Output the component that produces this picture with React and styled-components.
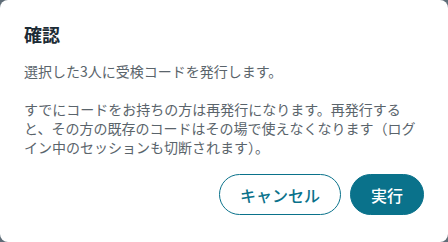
import styled, { createGlobalStyle } from "styled-components";

const GlobalStyle = createGlobalStyle`
  html, body {
    margin: 0;
    padding: 0;
    background: #5f6d78;
  }
  body {
    font-family: "Noto Sans CJK JP", "Noto Sans", sans-serif;
  }
`;

const Dialog = styled.div`
  box-sizing: border-box;
  width: 448px;
  height: 242px;
  background: #ffffff;
  border-radius: 8px;
  padding: 22px 24px 0;
  display: flex;
  flex-direction: column;
`;

const Title = styled.h2`
  margin: 0;
  font-size: 18px;
  line-height: 25px;
  font-weight: 700;
  color: #1c2b35;
`;

const Message = styled.p`
  margin: 15px 0 0;
  font-size: 14px;
  line-height: 19px;
  color: #5a646b;
  white-space: pre-line;
`;

const Actions = styled.div`
  display: flex;
  justify-content: flex-end;
  gap: 9px;
  margin-top: 17px;
`;

const Button = styled.button`
  box-sizing: border-box;
  height: 41px;
  padding: 0 20px;
  border-radius: 999px;
  border: 1px solid #0a728b;
  font-family: inherit;
  font-size: 16px;
  font-weight: 500;
  cursor: pointer;
  background: ${(p) => (p.$primary ? "#0a728b" : "#ffffff")};
  color: ${(p) => (p.$primary ? "#ffffff" : "#0a728b")};
`;

const App = () => {
  return (
    <>
      <GlobalStyle />
      <Dialog role="dialog">
        <Title>確認</Title>
        <Message>
          {"選択した3人に受検コードを発行します。\n\nすでにコードをお持ちの方は再発行になります。再発行すると、その方の既存のコードはその場で使えなくなります（ログイン中のセッションも切断されます）。"}
        </Message>
        <Actions>
          <Button type="button">キャンセル</Button>
          <Button type="button" $primary>
            実行
          </Button>
        </Actions>
      </Dialog>
    </>
  );
};

export default App;
